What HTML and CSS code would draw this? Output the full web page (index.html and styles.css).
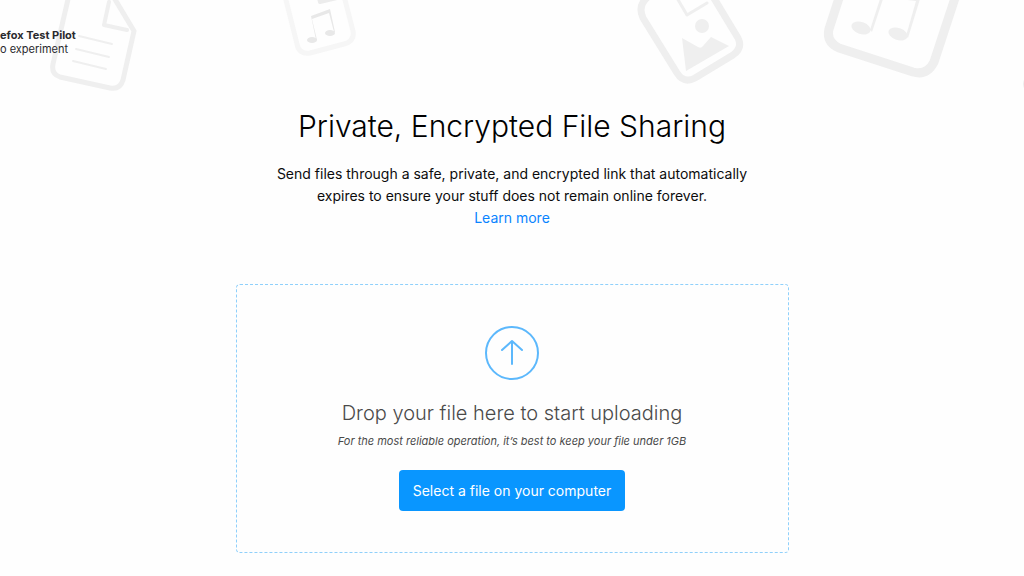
FILE: index.html
```html
<!DOCTYPE html>
<html lang="en">
<head>
    <meta charset="UTF-8">
    <meta name="viewport" content="width=device-width, initial-scale=1.0">
    <title>Private, Encrypted File Sharing</title>
    <link rel="stylesheet" href="styles.css">
</head>
<body>

    <svg class="backdrop" viewBox="0 0 1024 110" preserveAspectRatio="xMidYMin slice" fill="none" stroke-linecap="round" stroke-linejoin="round" aria-hidden="true">
        <!-- text document -->
        <g stroke="#efefef" stroke-width="5">
            <path d="M69 -5L53 64Q51 74 60 77L110 88Q120 90 123 80L134 31L113 -4"/>
            <path d="M109 2L104 25L127 30" stroke-width="4"/>
            <path d="M79 36L112 44M76 49L109 57M73 61L106 69" stroke-width="2"/>
        </g>
        <!-- small music file -->
        <path d="M285 -4L297 44Q299 55 310 53L344 44Q355 41 353 31L344 -4" stroke="#f6f6f6" stroke-width="5"/>
        <path d="M319 -2L320 2L337 -2" stroke="#ececec" stroke-width="4"/>
        <g fill="#e8e8e8">
            <ellipse cx="312" cy="40" rx="5" ry="3"/>
            <ellipse cx="330" cy="33" rx="5" ry="3"/>
            <path d="M311 16L330 9L335 32L334 32L329 13L312 19L317 40L316 40Z"/>
        </g>
        <!-- picture file -->
        <path d="M649 -4Q637 5 643 18L677 73Q684 84 695 78L733 55Q743 48 738 38L712 -5" stroke="#efefef" stroke-width="7"/>
        <path d="M677 -2L687 15L707 3" stroke="#efefef" stroke-width="3"/>
        <circle cx="702" cy="26" r="7" fill="#efefef"/>
        <path d="M682 38L698 47Q701 49 703 46L711 37L729 46L686 71Z" fill="#efefef"/>
        <!-- large music file -->
        <path d="M840 -5L829 29Q826 42 839 48L913 72Q927 76 934 62L956 -5" stroke="#efefef" stroke-width="9"/>
        <g fill="#efefef">
            <ellipse cx="861" cy="28" rx="10" ry="6" transform="rotate(18 861 28)"/>
            <ellipse cx="898" cy="34" rx="10" ry="6" transform="rotate(18 898 34)"/>
            <path d="M880 -1L883 -1L872 32L870 30ZM907 -1L920 -1L908 38L906 36L916 1L907 0Z"/>
        </g>
        <circle cx="1032" cy="84" r="9" fill="#efefef"/>
    </svg>

    <header class="header">
        <p class="header-title">efox Test Pilot</p>
        <p class="header-subtitle">o experiment</p>
    </header>

    <main class="main">
        <h1 class="title">Private, Encrypted File Sharing</h1>
        <p class="description">Send files through a safe, private, and encrypted link that automatically expires to ensure your stuff does not remain online forever.</p>
        <a class="link" href="#">Learn more</a>

        <section class="upload">
            <svg class="upload-icon" viewBox="0 0 54 54" fill="none" stroke="#5cb8fc" stroke-width="2" stroke-linecap="round" stroke-linejoin="round" aria-hidden="true">
                <circle cx="27" cy="27" r="26"/>
                <path d="M27 38V15M17 24L27 15L37 24"/>
            </svg>
            <h2 class="upload-title">Drop your file here to start uploading</h2>
            <p class="upload-hint">For the most reliable operation, it’s best to keep your file under 1GB</p>
            <button class="upload-button" type="button">Select a file on your computer</button>
        </section>
    </main>

</body>
</html>
```
FILE: styles.css
```css
body {
    font-family: Inter, "Liberation Sans", sans-serif;
    background-color: #fefefe;
    color: #0c0c0d;
    margin: 0;
    overflow-x: hidden;
}
.backdrop {
    position: absolute;
    top: 0;
    left: 0;
    width: 100%;
    height: 110px;
    z-index: -1;
}
.header {
    padding-top: 28px;
    font-size: 11px;
    line-height: 14px;
    color: #2a2a2e;
}
.header p {
    margin: 0;
}
.header .header-title {
    font-weight: bold;
}
.main {
    display: flex;
    flex-direction: column;
    align-items: center;
    padding: 50px 16px 20px;
    text-align: center;
}
.title {
    margin: 0;
    font-size: 30px;
    font-weight: 300;
    line-height: 40px;
    color: #000;
}
.description {
    max-width: 490px;
    margin: 17px 0 0;
    font-size: 14px;
    line-height: 22px;
}
.link {
    font-size: 14px;
    line-height: 22px;
    color: #0a84ff;
    text-decoration: none;
}
.upload {
    display: flex;
    flex-direction: column;
    align-items: center;
    box-sizing: border-box;
    width: 100%;
    max-width: 553px;
    margin-top: 55px;
    padding: 41px 16px;
    border: 1px dashed #8fd0fb;
    border-radius: 4px;
    color: #4a4a4a;
}
.upload-icon {
    width: 54px;
    height: 54px;
}
.upload-title {
    margin: 18px 0 0;
    font-size: 20px;
    font-weight: 300;
    line-height: 30px;
}
.upload-hint {
    margin: 5px 0 0;
    font-size: 11px;
    font-style: italic;
    line-height: 16px;
}
.upload-button {
    margin-top: 21px;
    padding: 10px 14px;
    border: 0;
    border-radius: 4px;
    background-color: #0996ff;
    color: #fff;
    font-family: inherit;
    font-size: 14px;
    line-height: 21px;
    cursor: pointer;
}
```
